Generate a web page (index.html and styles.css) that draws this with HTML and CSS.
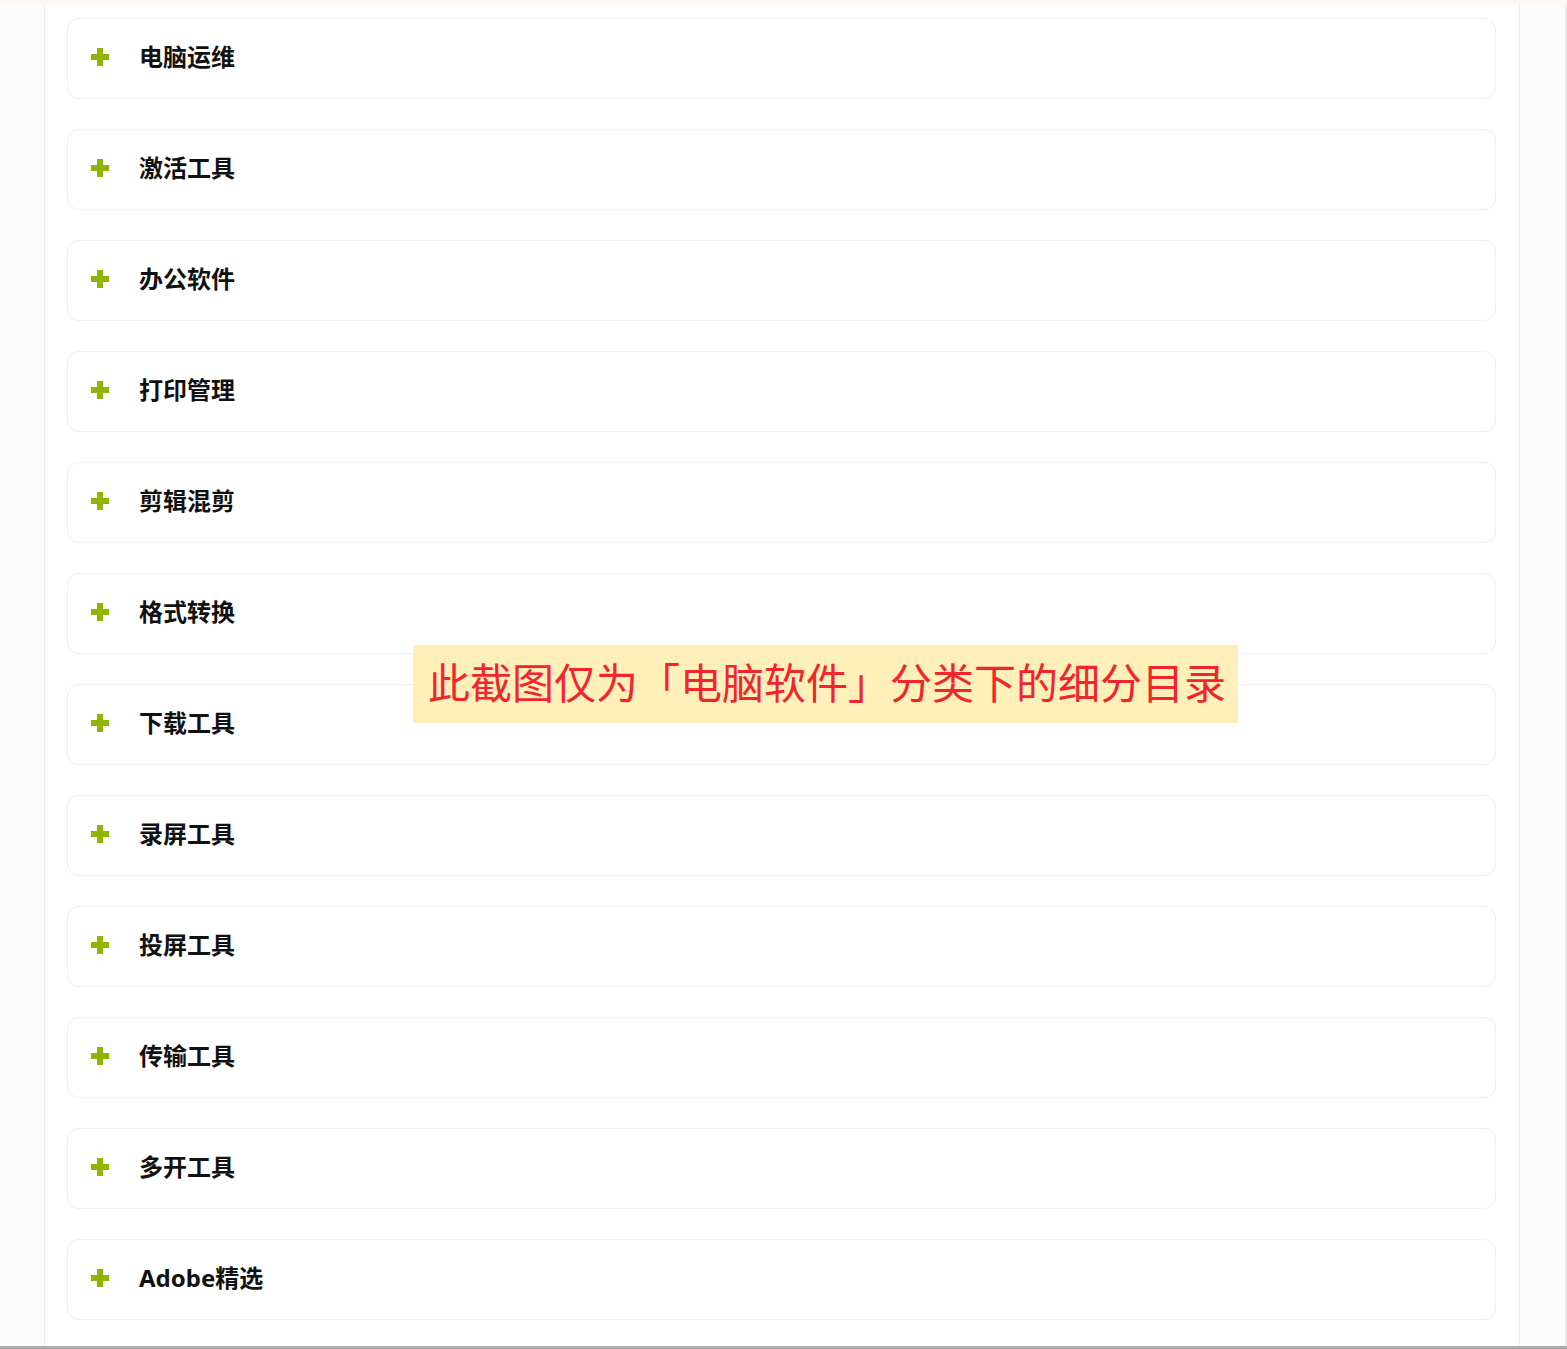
FILE: index.html
```html
<!DOCTYPE html>
<html lang="zh-CN">
<head>
<meta charset="utf-8">
<title>电脑软件</title>
<link rel="stylesheet" href="styles.css">
</head>
<body>
<div class="topbar"></div>
<div class="frame">
  <aside class="side left"></aside>
  <main class="main">
    <div class="card"><span class="plus"></span><span class="label">电脑运维</span></div>
    <div class="card"><span class="plus"></span><span class="label">激活工具</span></div>
    <div class="card"><span class="plus"></span><span class="label">办公软件</span></div>
    <div class="card"><span class="plus"></span><span class="label">打印管理</span></div>
    <div class="card"><span class="plus"></span><span class="label">剪辑混剪</span></div>
    <div class="card"><span class="plus"></span><span class="label">格式转换</span></div>
    <div class="card"><span class="plus"></span><span class="label">下载工具</span></div>
    <div class="card"><span class="plus"></span><span class="label">录屏工具</span></div>
    <div class="card"><span class="plus"></span><span class="label">投屏工具</span></div>
    <div class="card"><span class="plus"></span><span class="label">传输工具</span></div>
    <div class="card"><span class="plus"></span><span class="label">多开工具</span></div>
    <div class="card"><span class="plus"></span><span class="label">Adobe精选</span></div>
  </main>
  <aside class="side right"></aside>
</div>
<div class="bottombar"></div>
<div class="note">此截图仅为「电脑软件」分类下的细分目录</div>
</body>
</html>
```
FILE: styles.css
```css
html, body {
  margin: 0;
  padding: 0;
  background: #ffffff;
  font-family: "Noto Sans", "Noto Sans CJK SC", sans-serif;
}
body {
  width: 1567px;
  height: 1349px;
  overflow: hidden;
  position: relative;
}
.topbar {
  position: absolute;
  left: 0;
  top: 0;
  width: 1567px;
  height: 8px;
  background: linear-gradient(#fff7ec, rgba(255, 255, 255, 0));
  z-index: 2;
}
.frame {
  display: flex;
  height: 1346px;
  border-right: 2px solid #e8e8e8;
  box-sizing: border-box;
}
.side {
  background: #fcfcfc;
  flex: none;
}
.side.left {
  width: 44px;
  border-right: 1px solid #ececec;
}
.side.right {
  width: 45px;
  border-left: 1px solid #ececec;
}
.main {
  flex: none;
  width: 1474px;
  box-sizing: border-box;
  padding: 18px 23px 0 22px;
  display: flex;
  flex-direction: column;
  gap: 30px;
  background: #fff;
}
.card {
  height: 81px;
  flex: none;
  box-sizing: border-box;
  border: 1px solid #efefef;
  border-radius: 12px;
  display: flex;
  align-items: center;
  padding-left: 23px;
}
.plus {
  position: relative;
  width: 18px;
  height: 18px;
  flex: none;
  top: -2px;
}
.plus::before,
.plus::after {
  content: "";
  position: absolute;
  background: #8fb500;
}
.plus::before {
  left: 0;
  top: 6px;
  width: 18px;
  height: 6px;
}
.plus::after {
  left: 6px;
  top: 0;
  width: 6px;
  height: 18px;
}
.label {
  margin-left: 30px;
  font-size: 24px;
  font-weight: 700;
  color: #111;
  line-height: 1;
  position: relative;
  top: -2px;
}
.bottombar {
  height: 3px;
  background: #ababab;
}
.note {
  position: absolute;
  left: 413px;
  top: 645px;
  width: 825px;
  height: 78px;
  box-sizing: border-box;
  padding-left: 15px;
  background: #fff0b9;
  color: #f0252d;
  font-family: "Noto Sans CJK SC", sans-serif;
  font-size: 42px;
  line-height: 72px;
  white-space: nowrap;
  overflow: hidden;
}
```
